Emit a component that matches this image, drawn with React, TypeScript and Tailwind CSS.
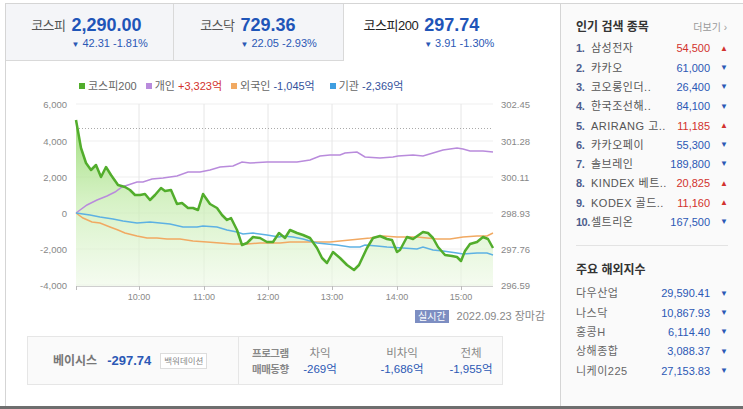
import React from 'react'

const font = { fontFamily: '"Liberation Sans", "Noto Sans CJK KR", sans-serif' }

const tabs = [
  { name: '코스피', value: '2,290.00', change: '42.31 -1.81%', w: 'w-[168px]', active: false },
  { name: '코스닥', value: '729.36', change: '22.05 -2.93%', w: 'w-[170px]', active: false },
  { name: '코스피200', value: '297.74', change: '3.91 -1.30%', w: 'w-[170px]', active: true },
]

const popular = [
  { name: '삼성전자', price: '54,500', up: true },
  { name: '카카오', price: '61,000', up: false },
  { name: '코오롱인더..', price: '26,400', up: false },
  { name: '한국조선해..', price: '84,100', up: false },
  { name: 'ARIRANG 고..', price: '11,185', up: true },
  { name: '카카오페이', price: '55,300', up: false },
  { name: '솔브레인', price: '189,800', up: false },
  { name: 'KINDEX 베트..', price: '20,825', up: true },
  { name: 'KODEX 골드..', price: '11,160', up: true },
  { name: '셀트리온', price: '167,500', up: false },
]

const overseas = [
  { name: '다우산업', price: '29,590.41' },
  { name: '나스닥', price: '10,867.93' },
  { name: '홍콩H', price: '6,114.40' },
  { name: '상해종합', price: '3,088.37' },
  { name: '니케이225', price: '27,153.83' },
]

const green =
  '76,120 81,148 86,163 91,170 96,165 101,177 106,167 111,175 118,185 125,187 130,190 135,195 140,195 145,194 150,200 155,195 161,188 165,191 171,190 177,204 182,203 188,208 193,208 198,210 203,194 210,204 217,208 222,215 227,220 231,218 237,230 242,245 247,243 253,237 260,238 267,242 273,242 279,233 285,238 290,230 297,233 303,235 310,238 317,248 322,258 327,263 333,252 340,258 347,265 354,270 359,265 367,248 373,238 380,236 387,239 392,240 397,252 400,250 407,237 413,239 423,232 428,233 433,238 438,247 445,255 452,256 457,257 461,261 465,251 470,244 477,242 483,237 488,239 493,248'
const purple =
  '76,213 87,205 97,200 107,196 115,192 122,187 128,185 137,182 143,182 152,179 163,178 177,176 188,172 200,172 210,170 220,167 233,166 242,162 250,163 267,162 297,162 310,160 320,156 330,155 340,155 345,153 357,152 365,157 380,158 393,157 398,156 413,155 423,156 433,153 443,150 450,149 457,148 463,149 470,151 483,151 493,152'
const orange =
  '76,213 83,218 92,222 100,223 110,227 118,230 125,233 137,236 147,238 157,238 167,239 180,239 193,241 207,242 220,243 233,244 247,244 260,243 280,243 290,242 310,242 330,242 350,240 370,238 383,236 397,237 417,237 437,239 450,239 463,237 477,236 487,236 493,233'
const blue =
  '76,213 90,215 100,217 113,219 123,221 137,223 150,222 160,223 170,224 183,227 197,227 203,226 217,227 227,230 237,232 243,234 253,233 267,235 279,237 283,236 293,237 303,239 317,243 337,245 350,247 360,247 365,245 377,246 387,247 403,248 417,249 423,247 433,250 443,251 457,253 463,254 477,253 487,253 493,255'

const gridY = [104, 141, 177, 213, 249, 285]
const leftLabels = ['6,000', '4,000', '2,000', '0', '-2,000', '-4,000']
const rightLabels = ['302.45', '301.28', '300.11', '298.93', '297.76', '296.59']
const hours = [
  { x: 139, t: '10:00' },
  { x: 204, t: '11:00' },
  { x: 268, t: '12:00' },
  { x: 332, t: '13:00' },
  { x: 397, t: '14:00' },
  { x: 461, t: '15:00' },
]

function Chart() {
  return (
    <svg width="550" height="210" viewBox="6 95 550 210" className="block" style={font}>
      <defs>
        <linearGradient id="greenFill" gradientUnits="userSpaceOnUse" x1="0" y1="115" x2="0" y2="286">
          <stop offset="0" stopColor="#8fd766" stopOpacity="0.9" />
          <stop offset="0.5" stopColor="#c4ecac" stopOpacity="0.7" />
          <stop offset="1" stopColor="#eef9e6" stopOpacity="0.6" />
        </linearGradient>
      </defs>
      {gridY.map((y) => (
        <line key={y} x1="76" x2="493" y1={y} y2={y} stroke="#efefef" />
      ))}
      {hours.map((h) => (
        <line key={h.x} x1={h.x} x2={h.x} y1="104" y2="286" stroke="#e6e6e6" />
      ))}
      <line x1="76" x2="493" y1="128.5" y2="128.5" stroke="#aaa" strokeDasharray="1 2" />
      <line x1="76" x2="493" y1="286.5" y2="286.5" stroke="#cfcfcf" />
      {[76, ...hours.map((h) => h.x)].map((x) => (
        <line key={x} x1={x + 0.5} x2={x + 0.5} y1="286" y2="290" stroke="#bbb" />
      ))}
      <polygon points={`${green} 493,286 76,286`} fill="url(#greenFill)" />
      <polyline points={purple} fill="none" stroke="#b98bdc" strokeWidth="1.5" />
      <polyline points={orange} fill="none" stroke="#f1a962" strokeWidth="1.5" />
      <polyline points={blue} fill="none" stroke="#5db1e3" strokeWidth="1.5" />
      <polyline points={green} fill="none" stroke="#52ad2c" strokeWidth="2.5" strokeLinejoin="round" />
      {gridY.map((y, i) => (
        <text key={'l' + y} x="67" y={y + 3.5} textAnchor="end" fontSize="9.5" fill="#888">
          {leftLabels[i]}
        </text>
      ))}
      {gridY.map((y, i) => (
        <text key={'r' + y} x="501" y={y + 3.5} fontSize="9.5" fill="#888">
          {rightLabels[i]}
        </text>
      ))}
      {hours.map((h) => (
        <text key={h.t} x={h.x} y="300" textAnchor="middle" fontSize="9" fill="#888">
          {h.t}
        </text>
      ))}
    </svg>
  )
}

function Legend() {
  return (
    <div className="flex h-[34px] items-start gap-[9px] whitespace-nowrap pl-[73px] pt-[18px] text-[11px] leading-[14px] text-[#666]">
      <span className="flex items-center gap-[3px]">
        <i className="inline-block h-[6px] w-[6px] bg-[#52ad2c]" />
        코스피200
      </span>
      <span className="flex items-center gap-[3px]">
        <i className="inline-block h-[6px] w-[6px] bg-[#b98bdc]" />
        개인 <b className="font-normal text-[#d2322d]">+3,323억</b>
      </span>
      <span className="flex items-center gap-[3px]">
        <i className="inline-block h-[6px] w-[6px] bg-[#f1a962]" />
        외국인 <b className="font-normal text-[#34529c]">-1,045억</b>
      </span>
      <span className="ml-[6px] flex items-center gap-[3px]">
        <i className="inline-block h-[6px] w-[6px] bg-[#3f9ee0]" />
        기관 <b className="font-normal text-[#34529c]">-2,369억</b>
      </span>
    </div>
  )
}

function Tri({ up }: { up: boolean }) {
  return up ? (
    <span className="ml-[10px] text-[8px] text-[#d2322d]">▲</span>
  ) : (
    <span className="ml-[10px] text-[8px] text-[#2b58b5]">▼</span>
  )
}

export default function App() {
  return (
    <div className="h-[409px] w-[743px] overflow-hidden bg-white" style={font}>
      <div className="flex h-[406px] pl-[5px] pt-[3px]">
        <main className="flex w-[555px] flex-col border-l border-t border-[#d5d5d5]">
          <div className="flex h-[57px]">
            {tabs.map((t) => (
              <div
                key={t.name}
                className={
                  t.active
                    ? `${t.w} flex justify-center bg-white pt-[10px]`
                    : `${t.w} flex justify-center border-b border-r border-[#d9d9d9] bg-[#f4f5f8] pt-[10px]`
                }
              >
                <span
                  className={
                    t.active
                      ? 'mt-[3px] text-[13px] leading-[18px] tracking-[-0.5px] text-[#222]'
                      : 'mt-[3px] text-[13px] leading-[18px] tracking-[-0.5px] text-[#555]'
                  }
                >
                  {t.name}
                </span>
                <div className="ml-[6px] flex flex-col">
                  <span className="text-[18px] font-bold leading-[22px] text-[#1f55b8]">{t.value}</span>
                  <span className="text-[11px] leading-[14px] text-[#2b58b5]">
                    <span className="mr-[3px] text-[8px]">▼</span>
                    {t.change}
                  </span>
                </div>
              </div>
            ))}
            <div className="flex-1 bg-white" />
          </div>
          <Legend />
          <Chart />
          <div className="mt-[4px] flex h-[14px] items-center whitespace-nowrap pl-[409px]">
            <span className="bg-[#7d8ec2] px-[3px] text-[10px] leading-[13px] text-white">실시간</span>
            <span className="ml-[8px] text-[11px] text-[#888]">2022.09.23 장마감</span>
          </div>
          <div className="ml-[21px] mt-[13px] flex h-[49px] w-[476px] border border-[#e6e6e6] bg-[#fafafa]">
            <div className="flex w-[227px] items-center whitespace-nowrap border-r border-[#e6e6e6] pl-[25px]">
              <span className="text-[12px] font-bold text-[#777]">베이시스</span>
              <span className="ml-[10px] text-[13px] font-bold text-[#2b58b5]">-297.74</span>
              <span className="ml-[9px] border border-[#ddd] bg-white px-[3px] text-[8.5px] leading-[14px] text-[#888]">
                백워데이션
              </span>
            </div>
            <div className="flex items-center whitespace-nowrap text-[11.5px] leading-[16px]">
              <div className="ml-[13px] flex w-[36px] flex-col text-[10.5px] font-bold tracking-[-0.5px] text-[#888]">
                <span>프로그램</span>
                <span>매매동향</span>
              </div>
              <div className="ml-[1px] flex w-[62px] flex-col items-center">
                <span className="text-[#888]">차익</span>
                <span className="text-[#2b58b5]">-269억</span>
              </div>
              <div className="ml-[20px] flex w-[62px] flex-col items-center">
                <span className="text-[#888]">비차익</span>
                <span className="text-[#2b58b5]">-1,686억</span>
              </div>
              <div className="ml-[7px] flex w-[62px] flex-col items-center">
                <span className="text-[#888]">전체</span>
                <span className="text-[#2b58b5]">-1,955억</span>
              </div>
            </div>
          </div>
        </main>
        <aside className="flex flex-1 flex-col border-l border-t border-[#d5d5d5] bg-[#fafafa] px-[15px] pt-[14px]">
          <div className="flex items-center justify-between pr-[1px]">
            <span className="text-[12px] font-bold text-[#333]">인기 검색 종목</span>
            <span className="text-[10px] text-[#999]">더보기 ›</span>
          </div>
          <div className="mt-[3px] flex flex-col">
            {popular.map((p, i) => (
              <div key={p.name} className="flex h-[19.3px] items-center whitespace-nowrap text-[11px]">
                <span className="w-[15px] font-bold tracking-[-0.5px] text-[#4d5d8c]">{i + 1}.</span>
                <span className="flex-1 tracking-[0.5px] text-[#555]">{p.name}</span>
                <span className={p.up ? 'text-[#d2322d]' : 'text-[#2b58b5]'}>{p.price}</span>
                <Tri up={p.up} />
              </div>
            ))}
          </div>
          <div className="mt-[13px] border-t border-[#e3e3e3]" />
          <span className="mt-[15px] text-[12px] font-bold text-[#333]">주요 해외지수</span>
          <div className="mt-[5px] flex flex-col">
            {overseas.map((o) => (
              <div key={o.name} className="flex h-[19.3px] items-center whitespace-nowrap text-[11px]">
                <span className="flex-1 tracking-[0.5px] text-[#666]">{o.name}</span>
                <span className="text-[#2b58b5]">{o.price}</span>
                <Tri up={false} />
              </div>
            ))}
          </div>
        </aside>
      </div>
      <div className="h-[3px] bg-[#6e6e6e]" />
    </div>
  )
}
